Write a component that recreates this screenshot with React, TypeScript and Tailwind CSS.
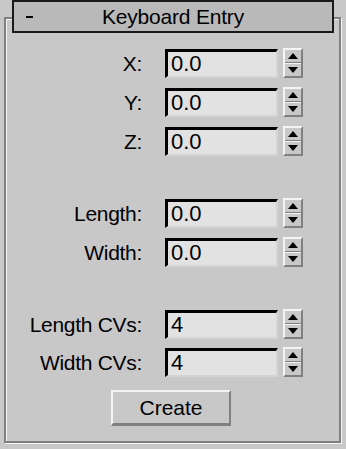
import React from "react";

function Spinner() {
  return (
    <div className="flex flex-col w-[20px] h-[30px] border-t-2 border-l-2 border-t-[#f4f4f4] border-l-[#f4f4f4] border-r-2 border-b-2 border-r-[#808080] border-b-[#808080] bg-[#c8c8c8]">
      <div className="flex-1 flex items-center justify-center border-b border-[#808080]">
        <svg width="10" height="6" viewBox="0 0 10 6"><path d="M5 0 L10 6 L0 6 Z" fill="#000" /></svg>
      </div>
      <div className="flex-1 flex items-center justify-center border-t border-[#f4f4f4]">
        <svg width="10" height="6" viewBox="0 0 10 6"><path d="M0 0 L10 0 L5 6 Z" fill="#000" /></svg>
      </div>
    </div>
  );
}

function Row({ label, value }: { label: string; value: string }) {
  return (
    <div className="flex items-center h-[30px]">
      <div className="w-[156px] text-right pr-[14px] text-[21px] tracking-[-0.3px] text-[#000] leading-none">{label}</div>
      <div className="ml-[9px] w-[113px] h-[29px] bg-[#e2e2e2] border-t-[3px] border-l-[3px] border-t-[#000] border-l-[#000] border-r-2 border-b-2 border-r-[#d4d4d4] border-b-[#d4d4d4] flex items-center pl-[3px] text-[22px] leading-none text-[#000]">
        {value}
      </div>
      <div className="ml-[5px]">
        <Spinner />
      </div>
    </div>
  );
}

export default function App() {
  return (
    <div className="w-[346px] h-[449px] bg-[#c8c8c8] relative overflow-hidden" style={{ fontFamily: '"Liberation Sans", Arial, sans-serif' }}>
      <div className="absolute left-[4px] top-[17px] w-[337px] h-[426px] border-2 border-[#808080] shadow-[inset_1px_1px_0_#f4f4f4,1px_1px_0_#f4f4f4]"></div>
      <div className="absolute left-[12px] top-0 w-[322px] h-[33px] bg-[#b9b9b9] border-[2px] border-[#1a1a1a] flex items-center">
        <span className="absolute left-[12px] top-[14px] w-[7px] h-[2px] bg-[#000]"></span>
        <div className="w-full text-center text-[21px] leading-none text-[#000] tracking-[-0.2px]">Keyboard Entry</div>
      </div>
      <div className="relative pt-[48px] flex flex-col">
        <div className="flex flex-col gap-[9px]">
          <Row label="X:" value="0.0" />
          <Row label="Y:" value="0.0" />
          <Row label="Z:" value="0.0" />
        </div>
        <div className="flex flex-col gap-[9px] mt-[42px]">
          <Row label="Length:" value="0.0" />
          <Row label="Width:" value="0.0" />
        </div>
        <div className="flex flex-col gap-[8px] mt-[42px]">
          <Row label="Length CVs:" value="4" />
          <Row label="Width CVs:" value="4" />
        </div>
        <div className="flex justify-center mt-[13px] pr-[4px]">
          <button className="w-[120px] h-[36px] bg-[#c8c8c8] border-t-2 border-l-2 border-t-[#f4f4f4] border-l-[#f4f4f4] border-r-2 border-b-[3px] border-r-[#808080] border-b-[#808080] text-[21px] text-[#000] leading-none">
            Create
          </button>
        </div>
      </div>
    </div>
  );
}
